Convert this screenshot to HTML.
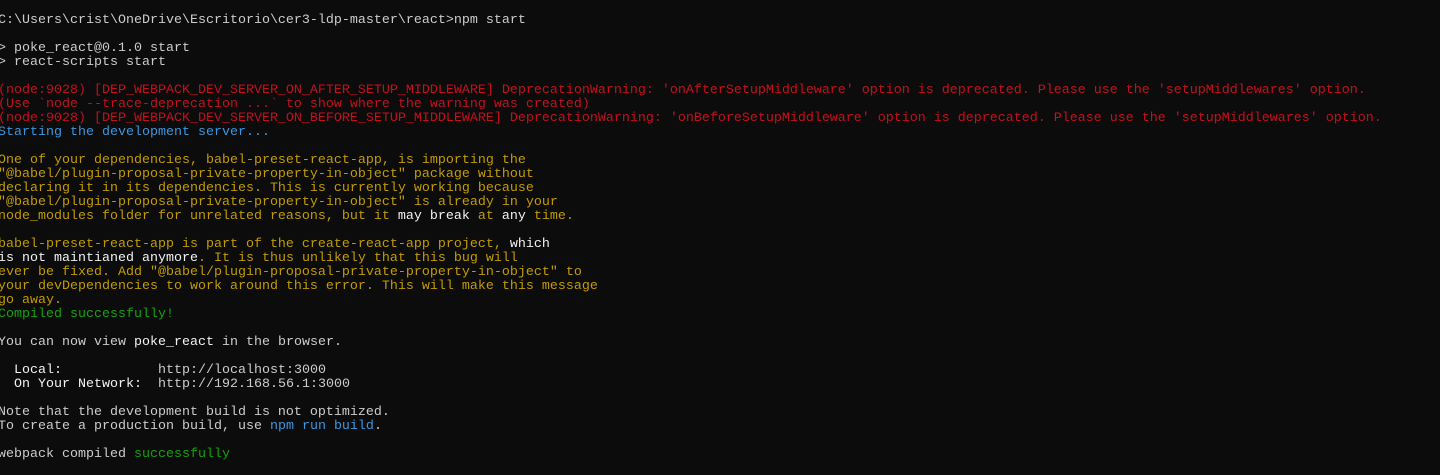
<!DOCTYPE html>
<html><head><meta charset="utf-8"><style>
html,body{margin:0;padding:0;background:#0c0c0c;width:1440px;height:475px;overflow:hidden}
pre{margin:0;position:absolute;left:-2px;top:14px;font-family:"Liberation Mono",monospace;font-size:13.333px;line-height:14px;color:#cccccc;white-space:pre}
.r{color:#c50f1f}.b{color:#3a96dd}.y{color:#c19c00}.g{color:#13a10e}.w{color:#f2f2f2}
</style></head><body><pre>C:\Users\crist\OneDrive\Escritorio\cer3-ldp-master\react&gt;npm start

&gt; poke_react@0.1.0 start
&gt; react-scripts start

<span class="r">(node:9028) [DEP_WEBPACK_DEV_SERVER_ON_AFTER_SETUP_MIDDLEWARE] DeprecationWarning: 'onAfterSetupMiddleware' option is deprecated. Please use the 'setupMiddlewares' option.
(Use `node --trace-deprecation ...` to show where the warning was created)
(node:9028) [DEP_WEBPACK_DEV_SERVER_ON_BEFORE_SETUP_MIDDLEWARE] DeprecationWarning: 'onBeforeSetupMiddleware' option is deprecated. Please use the 'setupMiddlewares' option.</span>
<span class="b">Starting the development server...</span>

<span class="y">One of your dependencies, babel-preset-react-app, is importing the
"@babel/plugin-proposal-private-property-in-object" package without
declaring it in its dependencies. This is currently working because
"@babel/plugin-proposal-private-property-in-object" is already in your
node_modules folder for unrelated reasons, but it <span class="w">may break</span> at <span class="w">any</span> time.

babel-preset-react-app is part of the create-react-app project, <span class="w">which
is not maintianed anymore</span>. It is thus unlikely that this bug will
ever be fixed. Add "@babel/plugin-proposal-private-property-in-object" to
your devDependencies to work around this error. This will make this message
go away.</span>
<span class="g">Compiled successfully!</span>

You can now view <span class="w">poke_react</span> in the browser.

  <span class="w">Local:</span>            http://localhost:3000
  <span class="w">On Your Network:</span>  http://192.168.56.1:3000

Note that the development build is not optimized.
To create a production build, use <span class="b">npm run build</span>.

webpack compiled <span class="g">successfully</span>
</pre></body></html>
